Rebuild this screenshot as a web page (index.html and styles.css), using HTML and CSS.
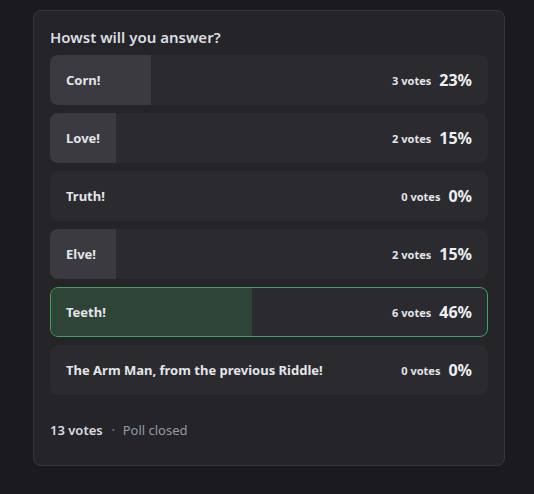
FILE: index.html
```html
<!DOCTYPE html>
<html>
<head>
<meta charset="utf-8">
<link rel="stylesheet" href="styles.css">
</head>
<body>
<div class="poll">
  <div class="question">Howst will you answer?</div>
  <div class="answers">
    <div class="answer">
      <div class="fill" style="width:23%"></div>
      <span class="label">Corn!</span>
      <span class="votes">3 votes</span><span class="pct">23%</span>
    </div>
    <div class="answer">
      <div class="fill" style="width:15%"></div>
      <span class="label">Love!</span>
      <span class="votes">2 votes</span><span class="pct">15%</span>
    </div>
    <div class="answer">
      <span class="label">Truth!</span>
      <span class="votes">0 votes</span><span class="pct">0%</span>
    </div>
    <div class="answer">
      <div class="fill" style="width:15%"></div>
      <span class="label">Elve!</span>
      <span class="votes">2 votes</span><span class="pct">15%</span>
    </div>
    <div class="answer winner">
      <div class="fill" style="width:46%"></div>
      <span class="label">Teeth!</span>
      <span class="votes">6 votes</span><span class="pct">46%</span>
    </div>
    <div class="answer">
      <span class="label">The Arm Man, from the previous Riddle!</span>
      <span class="votes">0 votes</span><span class="pct">0%</span>
    </div>
  </div>
  <div class="footer">
    <span class="total">13 votes</span>
    <span class="dot">•</span>
    <span class="status">Poll closed</span>
  </div>
</div>
</body>
</html>
```
FILE: styles.css
```css
html, body {
  margin: 0;
  padding: 0;
  background: #1b1b1f;
}
body {
  font-family: "Noto Sans", "Open Sans", sans-serif;
  color: #dbdee1;
  padding: 10px 29px 28px 33px;
}
.poll {
  width: 472px;
  height: 456px;
  box-sizing: border-box;
  background: #242429;
  border: 1px solid #36363c;
  border-radius: 8px;
  padding: 16px 16px 0 16px;
}
.question {
  font-size: 15px;
  font-weight: 600;
  line-height: 20px;
  color: #dbdee1;
  height: 20px;
  margin-bottom: 8px;
}
.answers {
  display: flex;
  flex-direction: column;
  gap: 8px;
}
.answer {
  position: relative;
  height: 50px;
  box-sizing: border-box;
  background: #2a2a2f;
  border-radius: 8px;
  overflow: hidden;
  display: flex;
  align-items: center;
  padding: 0 16px;
}
.fill {
  position: absolute;
  left: 0;
  top: 0;
  bottom: 0;
  background: #3a3a40;
}
.label, .votes, .pct {
  position: relative;
}
.label {
  flex: 1;
  font-size: 13px;
  font-weight: 700;
  color: #e4e5e8;
}
.votes {
  font-size: 11px;
  font-weight: 700;
  color: #e4e5e8;
  margin-right: 8px;
}
.pct {
  font-size: 16px;
  font-weight: 700;
  color: #eeeff1;
}
.answer.winner {
  border: 1px solid #3ba55c;
  padding: 0 15px;
}
.winner .fill {
  background: #2e4437;
}
.footer {
  display: flex;
  align-items: center;
  margin-top: 26px;
  font-size: 13px;
  line-height: 18px;
}
.total {
  font-weight: 600;
  color: #dbdee1;
}
.dot {
  color: #6d6f78;
  font-size: 8px;
  margin: 0 8px 0 9px;
}
.status {
  color: #949ba4;
}
```
